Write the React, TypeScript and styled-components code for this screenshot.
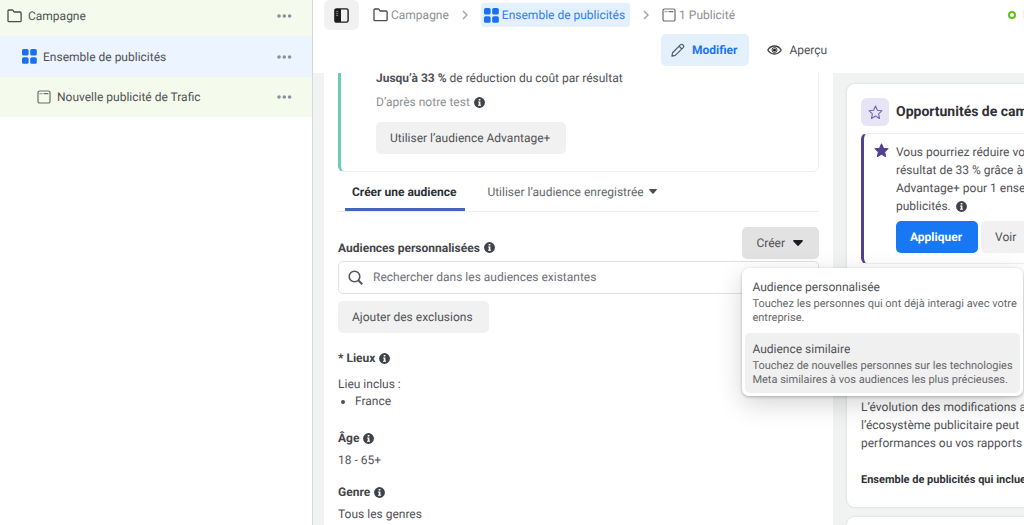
import React from "react";
import styled, { createGlobalStyle } from "styled-components";

const GlobalStyle = createGlobalStyle`
  * { box-sizing: border-box; }
  body {
    margin: 0;
    background: #fff;
    color: #505155;
    font: 12px/18px Roboto, "Liberation Sans", sans-serif;
    text-rendering: geometricPrecision;
    overflow: hidden;
  }
  button, input { font: inherit; color: inherit; text-rendering: inherit; }
  button { border: 0; padding: 0; background: none; cursor: pointer; }
  a { color: inherit; text-decoration: none; }
  p, h2, h3, ul { margin: 0; }
  svg { display: block; flex: none; }
`;

const Shell = styled.div`
  display: flex;
  height: 100vh;
`;

const Sidebar = styled.nav`
  flex: 0 0 313px;
  border-right: 1px solid #d5d8da;
`;

const TreeRow = styled.div<{ $level: number; $active?: boolean }>`
  display: flex;
  align-items: center;
  height: ${(p) => (p.$level === 0 ? 36 : p.$active ? 41 : 40)}px;
  padding: ${(p) => (p.$level === 0 ? "0 20px 4px 7px" : `0 20px 0 ${7 + p.$level * 15}px`)};
  background: ${(p) => (p.$active ? "#ecf4ff" : "#f5fbec")};
`;

const TreeLink = styled.a`
  display: flex;
  flex: 1;
  align-items: center;
  gap: 6px;
`;

const MoreButton = styled.button`
  display: flex;
  color: #8b8fa0;
`;

const Main = styled.main`
  display: flex;
  flex: 1;
  flex-direction: column;
  min-width: 0;
`;

const Header = styled.header`
  flex: 0 0 73px;
  overflow: hidden;
`;

const CrumbBar = styled.div`
  display: flex;
  align-items: center;
  height: 30px;
  padding-left: 11px;
`;

const PanelToggle = styled.button`
  display: grid;
  place-items: center;
  width: 35px;
  height: 30px;
  margin-right: 14px;
  border-radius: 6px;
  background: #f1f1f1;
`;

const Crumb = styled.a<{ $active?: boolean }>`
  display: flex;
  align-items: center;
  gap: 3px;
  height: 24px;
  white-space: nowrap;
  color: ${(p) => (p.$active ? "#2b80f5" : "#8e8f92")};
  background: ${(p) => (p.$active ? "#e5f0fd" : "transparent")};
  padding: ${(p) => (p.$active ? "0 5px 0 3px" : "0")};
  border-radius: 3px;
`;

const CrumbSep = styled.span`
  display: grid;
  place-items: center;
  width: 32px;
`;

const Status = styled.div`
  display: flex;
  align-items: center;
  gap: 7px;
  width: 16px;
  margin-left: auto;
  white-space: nowrap;
  color: #8e8f92;
`;

const StatusDot = styled.span`
  flex: none;
  width: 8px;
  height: 8px;
  border: 2px solid #62bd19;
  border-radius: 50%;
`;

const ModeBar = styled.div`
  display: flex;
  gap: 4px;
  padding: 4px 0 0 348px;
`;

const ModeButton = styled.button<{ $active?: boolean }>`
  display: flex;
  align-items: center;
  gap: 7px;
  height: 32px;
  padding: 0 12px 0 ${(p) => (p.$active ? 10 : 14)}px;
  border-radius: 5px;
  white-space: nowrap;
  font-weight: ${(p) => (p.$active ? 700 : 400)};
  color: ${(p) => (p.$active ? "#1b74f0" : "inherit")};
  background: ${(p) => (p.$active ? "#e5f0fd" : "transparent")};
`;

const Workspace = styled.div`
  display: flex;
  flex: 1;
  min-height: 0;
  padding-left: 11px;
  overflow: hidden;
  background: #f1f3f3;
`;

const FormPanel = styled.section`
  flex: 1;
  min-width: 0;
  padding: 0 14px;
  background: #fff;
`;

const TestCard = styled.div`
  margin-top: -5px;
  padding: 0 35px 17px;
  border: 1px solid #eeeff0;
  border-left: 3px solid #6ccbb8;
  border-radius: 6px;
`;

const TestNote = styled.p`
  display: flex;
  align-items: center;
  gap: 4px;
  padding: 6px 0 11px;
  color: #8e8f92;
`;

const Button = styled.button<{ $tone?: "primary" | "pressed" }>`
  display: inline-flex;
  align-items: center;
  gap: 8px;
  height: 32px;
  padding: 0 16px 0 14px;
  border-radius: 5px;
  white-space: nowrap;
  font-weight: ${(p) => (p.$tone === "primary" ? 700 : 400)};
  color: ${(p) => (p.$tone === "primary" ? "#fff" : "inherit")};
  background: ${(p) =>
    p.$tone === "primary" ? "#1877f2" : p.$tone === "pressed" ? "#e2e2e2" : "#f1f1f1"};
`;

const Tabs = styled.div`
  display: flex;
  gap: 15px;
  padding-left: 7px;
  border-bottom: 1px solid #ecedee;
`;

const Tab = styled.button<{ $active?: boolean }>`
  display: flex;
  align-items: center;
  gap: 5px;
  height: 39px;
  padding: 3px 9px 0 7px;
  border-bottom: 3px solid ${(p) => (p.$active ? "#4267b8" : "transparent")};
  font-weight: ${(p) => (p.$active ? 700 : 400)};
  color: ${(p) => (p.$active ? "#2c2e35" : "#65676b")};
`;

const FieldHead = styled.div`
  display: flex;
  align-items: center;
  justify-content: space-between;
  height: 32px;
  margin-top: 15px;
`;

const Label = styled.h3`
  display: flex;
  align-items: center;
  gap: 4px;
  font-size: inherit;
  line-height: 18px;
  font-weight: 700;
  color: #444549;
`;

const FieldLabel = styled.label`
  display: flex;
  align-items: center;
  gap: 4px;
  padding-top: 9px;
  font-weight: 700;
  color: #444549;
`;

const MenuAnchor = styled.div`
  position: relative;
`;

const Menu = styled.div`
  position: absolute;
  top: 41px;
  left: 0;
  z-index: 2;
  display: flex;
  flex-direction: column;
  gap: 2px;
  width: 281px;
  padding: 3px;
  border-radius: 7px;
  background: #fff;
  box-shadow: 0 1px 3px rgba(0, 0, 0, 0.25), 0 8px 26px rgba(0, 0, 0, 0.17);
`;

const MenuItem = styled.button<{ $hover?: boolean }>`
  height: 60px;
  padding: 0 7px;
  border-radius: 5px;
  text-align: left;
  white-space: nowrap;
  background: ${(p) => (p.$hover ? "#f0f0f0" : "transparent")};
`;

const MenuText = styled.span`
  display: block;
  padding-top: 1px;
  font-size: 11px;
  line-height: 14px;
  color: #66676a;
`;

const SearchBox = styled.div`
  display: flex;
  align-items: center;
  gap: 10px;
  height: 33px;
  margin: 2px 0 7px;
  padding: 0 9px;
  border: 1px solid #dfe1e3;
  border-radius: 5px;

  input {
    flex: 1;
    min-width: 0;
    padding: 0 0 2px;
    border: 0;
    outline: 0;
    background: none;
  }
  input::placeholder { color: #6d7078; opacity: 1; }
`;

const Settings = styled.div`
  display: flex;
  flex-direction: column;
  gap: 14px;
  padding-top: 16px;
`;

const Places = styled.div`
  padding: 9px 0 5px;
  line-height: 17px;
`;

const PlaceList = styled.ul`
  padding-left: 17px;
`;

const SettingValue = styled.p`
  padding-top: 4px;
`;

const Rail = styled.aside`
  display: flex;
  flex: 0 0 191px;
  min-width: 0;
  flex-direction: column;
  gap: 10px;
  padding: 11px 0 0 14px;
`;

const RailCard = styled.section`
  flex: none;
  width: 280px;
  height: 423px;
  padding: 14px;
  border-radius: 8px;
  background: #fff;
  box-shadow: 0 0 3px rgba(0, 0, 0, 0.13);
  white-space: nowrap;
`;

const RailTitle = styled.h2`
  display: flex;
  align-items: center;
  gap: 7px;
  font-size: 14px;
  line-height: 28px;
  font-weight: 700;
  color: #303135;
`;

const StarTile = styled.span`
  display: grid;
  place-items: center;
  width: 28px;
  height: 28px;
  border-radius: 6px;
  background: #e7e5f5;
`;

const Tip = styled.div`
  display: flex;
  gap: 7px;
  height: 131px;
  margin: 7px 0 134px;
  padding: 9px 10px;
  border: 1px solid #eeeff0;
  border-left: 3px solid #533f8f;
  border-radius: 6px;
`;

const TipActions = styled.div`
  display: flex;
  gap: 3px;
  padding-top: 6px;
`;

const InlineText = styled.span`
  display: flex;
  align-items: center;
  gap: 5px;
`;

const RailNote = styled.p`
  margin-bottom: 19px;
`;

const SmallStrong = styled.p`
  font-size: 11px;
  font-weight: 700;
  color: #303135;
`;

const FolderIcon = () => (
  <svg width="15" height="14" viewBox="0 0 15 14" fill="none" stroke="#4a4b4e" strokeWidth="1.3" strokeLinejoin="round">
    <path d="M1 11.7V1.8Q1 1 1.8 1h3.4q.5 0 .8.4L7.1 3h6q1 0 1 1v7.7q0 1-1 1H2q-1 0-1-1z" />
  </svg>
);

const GridIcon = () => (
  <svg width="15" height="15" viewBox="0 0 15 15" fill="#1971ee">
    <rect width="6.6" height="6.6" rx="1.6" />
    <rect x="8.2" width="6.6" height="6.6" rx="1.6" />
    <rect y="8.2" width="6.6" height="6.6" rx="1.6" />
    <rect x="8.2" y="8.2" width="6.6" height="6.6" rx="1.6" />
  </svg>
);

const AdIcon = () => (
  <svg width="14" height="14" viewBox="0 0 14 14" fill="none" stroke="#6b6c6f" strokeWidth="1.2">
    <rect x="1" y="1" width="12" height="12" rx="1.6" />
    <path d="M2.6 3.6h1M4.4 3.6h1M6.6 3.6h4.8" />
  </svg>
);

const DotsIcon = () => (
  <svg width="15" height="4" viewBox="0 0 15 4" fill="currentColor">
    <circle cx="2" cy="2" r="1.8" />
    <circle cx="7.3" cy="2" r="1.8" />
    <circle cx="12.6" cy="2" r="1.8" />
  </svg>
);

const ChevronIcon = () => (
  <svg width="6" height="10" viewBox="0 0 6 10" fill="none" stroke="#a3a7ae" strokeWidth="1.5">
    <path d="M1 1l4 4-4 4" />
  </svg>
);

const PanelIcon = () => (
  <svg width="15" height="15" viewBox="0 0 15 15" fill="none">
    <rect x=".9" y=".9" width="13.2" height="13.2" rx="1.6" stroke="#1d1d1f" strokeWidth="1.4" />
    <path d="M1 1h6v13H1z" fill="#1d1d1f" />
    <path d="M2.2 3.6h2M2.2 5.6h2M2.2 7.6h2" stroke="#aaa" strokeWidth=".8" />
  </svg>
);

const PencilIcon = () => (
  <svg width="14" height="14" viewBox="0 0 15 15" fill="none" stroke="#505c6c" strokeWidth="1.3" strokeLinejoin="round">
    <path d="M1 14l.7-3.6L10 2q1.4-1.4 2.9.1t.1 2.9L4.6 13.3zM8.600 3.400l3 3" />
  </svg>
);

const EyeIcon = () => (
  <svg width="15" height="10" viewBox="0 0 15 10" fill="none" stroke="#3c3d40" strokeWidth="1.3">
    <path d="M.8 5Q3.3 1 7.5 1t6.700 4Q11.7 9 7.5 9T.8 5z" />
    <circle cx="7.5" cy="5" r="2.5" strokeWidth="1" />
    <circle cx="7.5" cy="5" r="1.5" fill="#1d1d1f" stroke="none" />
  </svg>
);

const InfoIcon = () => (
  <svg width="11" height="11" viewBox="0 0 11 11">
    <circle cx="5.5" cy="5.5" r="5.4" fill="#3f4249" />
    <path d="M4.7 2h1.7v1.500H4.700zM4.100 4.500h2.300v3.300h.7v1H4v-1h.8V5.500h-.7z" fill="#fff" />
  </svg>
);

const CaretIcon = ({ size = 8, color = "#4b4c4f" }: { size?: number; color?: string }) => (
  <svg width={size} height={size * 0.6} viewBox="0 0 10 6" fill={color}>
    <path d="M.8 0h8.400q1.200.300.300 1.400L5.800 5.500q-.8.800-1.600 0L.5 1.400Q-.4.300.8 0z" />
  </svg>
);

const SearchIcon = () => (
  <svg width="15" height="15" viewBox="0 0 15 15" fill="none" stroke="#53565e" strokeWidth="1.6">
    <circle cx="6.5" cy="6.5" r="5.3" />
    <path d="M10.300 10.300l3.900 3.900" strokeWidth="2" />
  </svg>
);

const StarIcon = ({ filled }: { filled?: boolean }) => (
  <svg
    width="15"
    height="15"
    viewBox="0 0 15 15"
    fill={filled ? "#533f8f" : "none"}
    stroke={filled ? "#533f8f" : "#7565b3"}
    strokeWidth="1.1"
    strokeLinejoin="round"
  >
    <path d="M7.500 1l1.900 4.200 4.600.500-3.400 3.100.9 4.600-4-2.300-4 2.300.9-4.600L1 5.700l4.600-.5z" />
  </svg>
);

export default function App() {
  return (
    <Shell>
      <GlobalStyle />
      <Sidebar>
        <TreeRow $level={0}>
          <TreeLink href="#campagne"><FolderIcon />Campagne</TreeLink>
          <MoreButton aria-label="Options"><DotsIcon /></MoreButton>
        </TreeRow>
        <TreeRow $level={1} $active>
          <TreeLink href="#ensemble"><GridIcon />Ensemble de publicités</TreeLink>
          <MoreButton aria-label="Options"><DotsIcon /></MoreButton>
        </TreeRow>
        <TreeRow $level={2}>
          <TreeLink href="#publicite"><AdIcon />Nouvelle publicité de Trafic</TreeLink>
          <MoreButton aria-label="Options"><DotsIcon /></MoreButton>
        </TreeRow>
      </Sidebar>

      <Main>
        <Header>
          <CrumbBar>
            <PanelToggle aria-label="Panneau"><PanelIcon /></PanelToggle>
            <Crumb href="#campagne"><FolderIcon />Campagne</Crumb>
            <CrumbSep><ChevronIcon /></CrumbSep>
            <Crumb href="#ensemble" $active><GridIcon />Ensemble de publicités</Crumb>
            <CrumbSep><ChevronIcon /></CrumbSep>
            <Crumb href="#publicite"><AdIcon />1 Publicité</Crumb>
            <Status><StatusDot />En cours</Status>
          </CrumbBar>
          <ModeBar>
            <ModeButton $active><PencilIcon />Modifier</ModeButton>
            <ModeButton><EyeIcon />Aperçu</ModeButton>
          </ModeBar>
        </Header>

        <Workspace>
          <FormPanel>
            <TestCard>
              <p><strong>Jusqu’à 33 %</strong> de réduction du coût par résultat</p>
              <TestNote>D’après notre test <InfoIcon /></TestNote>
              <Button>Utiliser l’audience Advantage+</Button>
            </TestCard>
            <Tabs>
              <Tab $active>Créer une audience</Tab>
              <Tab>Utiliser l’audience enregistrée <CaretIcon /></Tab>
            </Tabs>

            <FieldHead>
              <FieldLabel htmlFor="audience-search">Audiences personnalisées <InfoIcon /></FieldLabel>
              <MenuAnchor>
                <Button $tone="pressed">Créer <CaretIcon size={10} color="#1d1d1f" /></Button>
                <Menu>
                  <MenuItem>
                    Audience personnalisée
                    <MenuText>Touchez les personnes qui ont déjà interagi avec votre<br />entreprise.</MenuText>
                  </MenuItem>
                  <MenuItem $hover>
                    Audience similaire
                    <MenuText>Touchez de nouvelles personnes sur les technologies<br />Meta similaires à vos audiences les plus précieuses.</MenuText>
                  </MenuItem>
                </Menu>
              </MenuAnchor>
            </FieldHead>
            <SearchBox>
              <SearchIcon />
              <input id="audience-search" placeholder="Rechercher dans les audiences existantes" />
            </SearchBox>
            <Button>Ajouter des exclusions</Button>

            <Settings>
              <section>
                <Label>* Lieux <InfoIcon /></Label>
                <Places>
                  <p>Lieu inclus :</p>
                  <PlaceList><li>France</li></PlaceList>
                </Places>
              </section>
              <section>
                <Label>Âge <InfoIcon /></Label>
                <SettingValue>18 - 65+</SettingValue>
              </section>
              <section>
                <Label>Genre <InfoIcon /></Label>
                <SettingValue>Tous les genres</SettingValue>
              </section>
            </Settings>
          </FormPanel>

          <Rail>
            <RailCard>
              <RailTitle><StarTile><StarIcon /></StarTile>Opportunités de campagne</RailTitle>
              <Tip>
                <StarIcon filled />
                <div>
                  <p>
                    Vous pourriez réduire votre<br />
                    résultat de 33 % grâce à<br />
                    Advantage+ pour 1 ensemble<br />
                    <InlineText>publicités. <InfoIcon /></InlineText>
                  </p>
                  <TipActions>
                    <Button $tone="primary">Appliquer</Button>
                    <Button>Voir</Button>
                  </TipActions>
                </div>
              </Tip>
              <RailNote>
                L’évolution des modifications apportées<br />
                l’écosystème publicitaire peut<br />
                performances ou vos rapports
              </RailNote>
              <SmallStrong>Ensemble de publicités qui incluent</SmallStrong>
            </RailCard>
            <RailCard />
          </Rail>
        </Workspace>
      </Main>
    </Shell>
  );
}
